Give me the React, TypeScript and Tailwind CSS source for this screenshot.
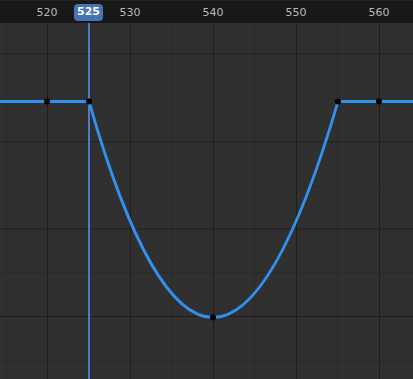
import React from "react";

const frames = [
  { f: 520, x: 47 },
  { f: 530, x: 130 },
  { f: 540, x: 213 },
  { f: 550, x: 296 },
  { f: 560, x: 379 },
];

export default function App() {
  const off = 23;
  const majorV = [47, 130, 213, 296, 379];
  const minorV = [6, 88.5, 171.5, 254.5, 337.5];
  const majorH = [54, 142, 229, 316.5].map((y) => y - off);
  const minorH = [10, 98, 186, 272.5, 361].map((y) => y - off);
  const Y = (y: number) => y - off;
  const path = `M0 ${Y(101.5)} L89 ${Y(101.5)} C130 ${Y(245)} 172 ${Y(317.5)} 213 ${Y(317.5)} C254 ${Y(317.5)} 296 ${Y(245)} 338 ${Y(101.5)} L413 ${Y(101.5)}`;
  const keys = [
    [47, 101.5],
    [89, 101.5],
    [213, 317.5],
    [338, 101.5],
    [379, 101.5],
  ];
  return (
    <div
      className="relative w-[413px] h-[379px] overflow-hidden bg-[#303030] flex flex-col"
      style={{ fontFamily: '"DejaVu Sans", sans-serif' }}
    >
      <div className="relative h-[23px] shrink-0 bg-[#181818] border-t border-[#222222]">
        {frames.map((fr) => (
          <span
            key={fr.f}
            className="absolute top-[5px] -translate-x-1/2 text-[11px] leading-[13px] text-[#b8b8b8]"
            style={{ left: fr.x }}
          >
            {fr.f}
          </span>
        ))}
      </div>
      <svg width={413} height={356} className="block">
        {minorV.map((x) => (
          <line key={"mv" + x} x1={x} x2={x} y1={0} y2={356} stroke="#2a2a2a" strokeWidth={1} />
        ))}
        {minorH.map((y) => (
          <line key={"mh" + y} x1={0} x2={413} y1={y} y2={y} stroke="#2a2a2a" strokeWidth={1} />
        ))}
        {majorV.map((x) => (
          <line key={"Mv" + x} x1={x + 0.5} x2={x + 0.5} y1={0} y2={356} stroke="#1e1e1e" strokeWidth={1} />
        ))}
        {majorH.map((y) => (
          <line key={"Mh" + y} x1={0} x2={413} y1={y} y2={y} stroke="#1e1e1e" strokeWidth={1.2} />
        ))}
        <line x1={89} x2={89} y1={0} y2={356} stroke="#4a7bc4" strokeWidth={2} />
        <path d={path} fill="none" stroke="#3290f0" strokeWidth={2.8} strokeLinejoin="round" />
        {keys.map(([x, y]) => (
          <circle key={"k" + x} cx={x} cy={Y(y)} r={3} fill="#000000" />
        ))}
      </svg>
      <div className="absolute left-[74px] top-[4px] h-[17px] w-[29px] rounded-[4px] bg-[#4772b3] flex items-center justify-center text-[11px] font-semibold text-white">
        525
      </div>
    </div>
  );
}
